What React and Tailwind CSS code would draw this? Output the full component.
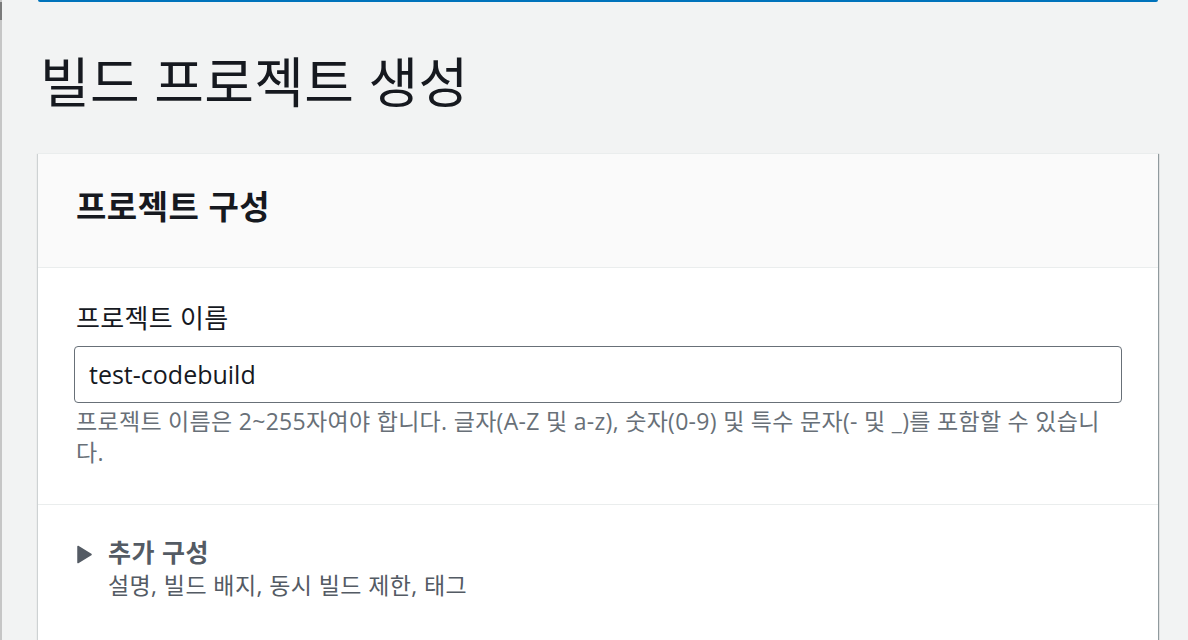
import React from "react";

const FONT = { fontFamily: '"Open Sans", "Noto Sans CJK KR", sans-serif' };

const App = () => {
    return (
        <div className="flex h-[640px] w-full overflow-hidden bg-[#f2f3f3] text-[#16191f]" style={FONT}>
            {/* left edge strip */}
            <div className="flex w-[2px] flex-col bg-[#c6c6c6]">
                <div className="mt-[2px] h-[18px] bg-[#7b7b7b]" />
            </div>

            <div className="flex flex-1 flex-col pl-[36px] pr-[30px]">
                {/* info alert (scrolled off) */}
                <div className="h-[9px] rounded-b-[3px] border-x border-b-2 border-[#0073bb] bg-[#f1faff]" />

                <h1 className="pl-[2px] pt-[48px] pb-[39px] text-[54px] leading-[64px] font-normal tracking-[0.3px]">
                    빌드 프로젝트 생성
                </h1>

                {/* card */}
                <div className="flex flex-col bg-white shadow-[1px_1px_1px_0_rgba(0,28,36,0.3),1px_1px_1px_0_rgba(0,28,36,0.15),-1px_1px_1px_0_rgba(0,28,36,0.15)] border-t border-[#eaeded]">
                    <div className="flex h-[114px] items-center border-b border-[#eaeded] bg-[#fafafa] px-[38px] pb-[8px]">
                        <h2 className="text-[33px] font-bold leading-none tracking-[0.5px]">프로젝트 구성</h2>
                    </div>

                    <div className="flex flex-col border-b border-[#eaeded] px-[36px] pt-[32px] pb-[36px]">
                        <label className="pl-[2px] text-[26px] leading-[36px] tracking-[0.3px]">프로젝트 이름</label>
                        <div className="mt-[10px] flex h-[57px] items-center rounded-[4px] border border-[#687078] px-[14px] text-[25px]">
                            test-codebuild
                        </div>
                        <p className="mt-[3px] pl-[2px] pr-[10px] text-[23px] leading-[31px] tracking-[0.3px] text-[#687078]">
                            프로젝트 이름은 2~255자여야 합니다. 글자(A-Z 및 a-z), 숫자(0-9) 및 특수 문자(- 및 _)를 포함할 수 있습니다.
                        </p>
                    </div>

                    <div className="flex gap-[16px] px-[39px] pt-[31px] pb-[80px]">
                        <svg width="15" height="19" viewBox="0 0 15 19" className="mt-[9px] shrink-0">
                            <path d="M1 1.5 L14 9.5 L1 17.5 Z" fill="#545b64" stroke="#545b64" strokeWidth="1.5" strokeLinejoin="round" />
                        </svg>
                        <div className="flex flex-col">
                            <span className="text-[25px] font-bold leading-[32px] tracking-[0.5px] text-[#545b64]">추가 구성</span>
                            <span className="text-[23px] leading-[34px] tracking-[0.4px] text-[#545b64]">설명, 빌드 배지, 동시 빌드 제한, 태그</span>
                        </div>
                    </div>
                </div>
            </div>
        </div>
    );
};

export default App;
